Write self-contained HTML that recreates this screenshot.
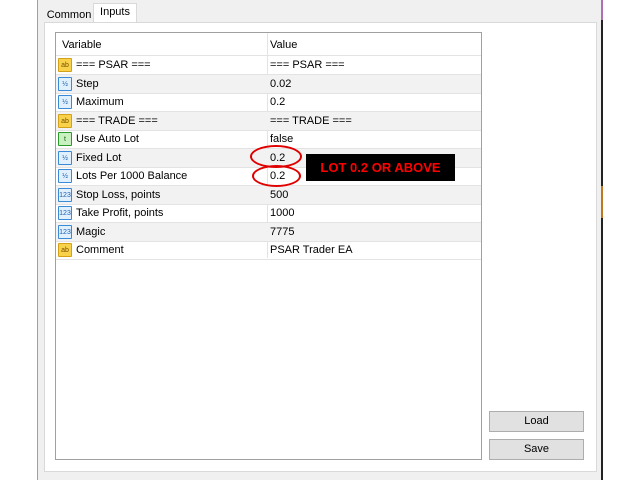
<!DOCTYPE html>
<html><head><style>
body{margin:0;width:640px;height:480px;background:#fff;position:relative;overflow:hidden;font-family:"Liberation Sans",sans-serif;font-size:11px;color:#000}
.dlg{position:absolute;left:37px;top:0;width:564px;height:480px;background:#f0f0f0;border-left:1px solid #a0a0a0}
.panel{position:absolute;left:44px;top:22px;width:551px;height:448px;background:#fff;border:1px solid #d9d9d9}
.tab{position:absolute;top:5px;height:17px;line-height:17px;font-size:11px;text-align:center}
.grid{position:absolute;left:55px;top:32px;width:425px;height:426px;border:1px solid #a0a0a0;background:#fff}
.row{position:absolute;left:0;width:425px;height:18px;border-bottom:1px solid #e3e3e3;line-height:19px}
.row .v{position:absolute;left:20px}
.row .val{position:absolute;left:214px}
.ic{position:absolute;left:2px;top:2px;width:13px;height:13px;font-size:7px;line-height:13px;text-align:center;border-radius:1px}
.ab{background:#f7d24a;border:1px solid #d4a017;color:#7a5000;width:12px;height:12px}
.hf{background:#e0f0ff;border:1px solid #3a8ad8;color:#1a5fb0;width:12px;height:12px}
.bo{background:#c8f0c0;border:1px solid #2a9a2a;color:#106010;width:12px;height:12px}
.btn{position:absolute;left:489px;width:93px;height:19px;background:#e1e1e1;border:1px solid #adadad;text-align:center;line-height:19px}
.ell{position:absolute;border:2px solid #e00000;border-radius:50%}
</style></head><body>
<div class="dlg"></div>
<div style="position:absolute;left:601px;top:0;width:2px;height:480px;background:#222"></div>
<div style="position:absolute;left:601px;top:0;width:2px;height:20px;background:#b070b0"></div>
<div style="position:absolute;left:601px;top:186px;width:2px;height:32px;background:#c07820"></div>
<div class="tab" style="left:45px;top:7px;width:48px">Common</div>
<div class="tab" style="left:93px;top:3px;width:42px;height:20px;background:#fff;border:1px solid #d9d9d9;border-bottom:none">Inputs</div>
<div class="panel"></div>
<div class="grid">
<div class="row" style="top:0;height:22px;line-height:24px;"><span style="position:absolute;left:6px">Variable</span><span class="val">Value</span></div>
<div style="position:absolute;left:211px;top:0;width:1px;height:225px;background:#e3e3e3"></div>
<div class="row" style="top:23px"><span class="ic ab">ab</span><span class="v">=== PSAR ===</span><span class="val">=== PSAR ===</span></div>
<div class="row" style="top:41.5px;background:#f2f2f2"><span class="ic hf">½</span><span class="v">Step</span><span class="val">0.02</span></div>
<div class="row" style="top:60px"><span class="ic hf">½</span><span class="v">Maximum</span><span class="val">0.2</span></div>
<div class="row" style="top:78.5px;background:#f2f2f2"><span class="ic ab">ab</span><span class="v">=== TRADE ===</span><span class="val">=== TRADE ===</span></div>
<div class="row" style="top:97px"><span class="ic bo">t</span><span class="v">Use Auto Lot</span><span class="val">false</span></div>
<div class="row" style="top:115.5px;background:#f2f2f2"><span class="ic hf">½</span><span class="v">Fixed Lot</span><span class="val">0.2</span></div>
<div class="row" style="top:134px"><span class="ic hf">½</span><span class="v">Lots Per 1000 Balance</span><span class="val">0.2</span></div>
<div class="row" style="top:152.5px;background:#f2f2f2"><span class="ic hf">123</span><span class="v">Stop Loss, points</span><span class="val">500</span></div>
<div class="row" style="top:171px"><span class="ic hf">123</span><span class="v">Take Profit, points</span><span class="val">1000</span></div>
<div class="row" style="top:189.5px;background:#f2f2f2"><span class="ic hf">123</span><span class="v">Magic</span><span class="val">7775</span></div>
<div class="row" style="top:208px"><span class="ic ab">ab</span><span class="v">Comment</span><span class="val">PSAR Trader EA</span></div>
</div>
<div class="ell" style="left:250px;top:145px;width:48px;height:19px"></div>
<div class="ell" style="left:252px;top:165px;width:45px;height:18px"></div>
<div style="position:absolute;left:306px;top:154px;width:149px;height:27px;background:#000;color:#f00;font-weight:bold;font-size:13px;line-height:27px;text-align:center">LOT 0.2 OR ABOVE</div>
<div class="btn" style="top:411px">Load</div>
<div class="btn" style="top:439px">Save</div>
</body></html>
